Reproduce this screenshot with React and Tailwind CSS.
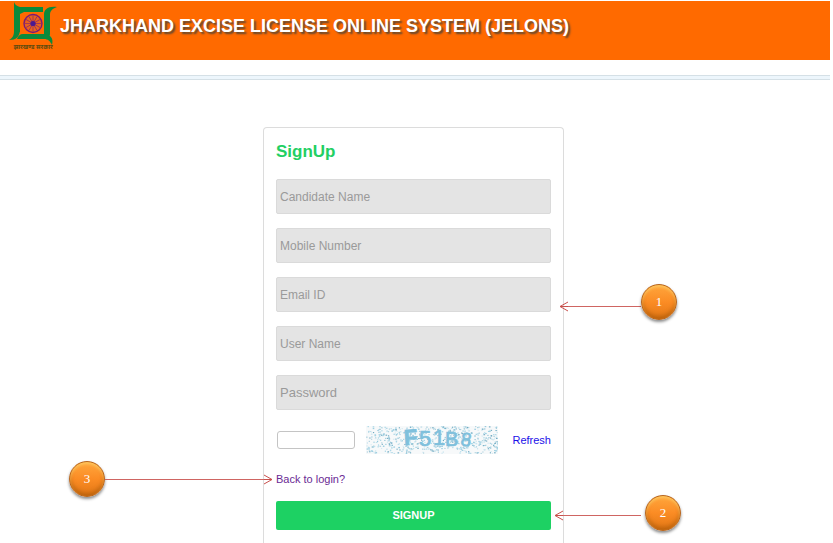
const fields = [
  { id: 'candidateName', label: 'Candidate Name', type: 'text' },
  { id: 'mobileNumber', label: 'Mobile Number', type: 'tel' },
  { id: 'emailId', label: 'Email ID', type: 'email' },
  { id: 'userName', label: 'User Name', type: 'text' },
  { id: 'password', label: 'Password', type: 'password' },
];

// fixed seed, so the speckles stay the same on every render
function makeSpeckles(count) {
  const colors = ['#9dd0e2', '#bfe0ec', '#93c8dc', '#d4eaf2', '#abd0dd', '#6ea9c1'];
  let seed = 41;
  const next = () => {
    seed = (seed * 16807) % 2147483647;
    return seed / 2147483647;
  };

  return Array.from({ length: count }, () => ({
    x: next() * 131,
    y: next() * 27,
    size: next() > 0.6 ? 1.6 : 1.2,
    color: colors[Math.floor(next() * colors.length)],
  }));
}

const speckles = makeSpeckles(640);

function Logo() {
  const spokes = Array.from({ length: 12 }, (_, i) => i * 30);

  return (
    <svg viewBox="0 0 48 49" className="h-[49px] w-12 shrink-0" role="img" aria-label="झारखण्ड सरकार">
      <g fill="#0b8a3c">
        <path d="M5 0 C6 3 8 4 11 5 H34 V10 H15 L11 12 V30 H5 Z" />
        <path d="M48 5 C43 7 41 9 41 13 V32 C41 35 38 37 35 37 V13 C35 7 39 4 48 5 Z" />
        <path d="M5 9 H11 V27 C11 35 7 38 0 38 C4 36 5 33 5 29 Z" />
        <path d="M8 37 C9 34 11 32 14 32 H35 C41 32 45 36 43 43 C41 39 39 37 35 37 Z" />
      </g>
      <circle cx="24" cy="21.5" r="9" fill="#e8631c" stroke="#7a1a78" strokeWidth="1.4" />
      <g stroke="#7a1a78" strokeWidth="0.6">
        {spokes.map((angle) => (
          <line key={angle} x1="24" y1="21.5" x2="24" y2="13.5" transform={`rotate(${angle} 24 21.5)`} />
        ))}
      </g>
      <circle cx="24" cy="21.5" r="2.6" fill="#4b1a90" />
      <text
        x="24"
        y="47"
        textAnchor="middle"
        fontSize="6"
        fontWeight="bold"
        fill="#5d4a10"
        fontFamily="'Noto Sans', sans-serif"
      >
        झारखण्ड सरकार
      </text>
    </svg>
  );
}

function Captcha() {
  return (
    <svg viewBox="0 0 132 28" className="h-7 w-[132px] shrink-0 bg-[#f7f9fa]" role="img" aria-label="Captcha F51B8">
      {speckles.map((s, i) => (
        <rect key={i} x={s.x} y={s.y} width={s.size} height="1.1" fill={s.color} />
      ))}
      <g fill="#7fc0dc" stroke="#7fc0dc" strokeWidth="0.7" fontFamily="'Liberation Sans', sans-serif" fontSize="22">
        <text x="38" y="19" fontWeight="bold" transform="rotate(-3 43 12)">F</text>
        <text x="53" y="20">5</text>
        <text x="67" y="19">1</text>
        <text x="79" y="20" fontSize="20">B</text>
        <text x="95" y="20" fontSize="19" transform="rotate(8 100 13)">8</text>
      </g>
    </svg>
  );
}

function Arrow({ direction, className = '' }) {
  const head = (
    <svg viewBox="0 0 9 11" className="h-[11px] w-[9px] shrink-0" fill="none" stroke="#c8504c" aria-hidden="true">
      <path d={direction === 'left' ? 'M9 1 L1 5.5 L9 10 M1 5.5 H9' : 'M0 1 L8 5.5 L0 10 M0 5.5 H8'} />
    </svg>
  );

  return (
    <span className={`flex min-w-0 flex-1 items-center ${className}`}>
      {direction === 'left' && head}
      <span className="h-px flex-1 bg-[#cf6562]" />
      {direction === 'right' && head}
    </span>
  );
}

function Ball({ children }) {
  return (
    <span className="flex size-9 shrink-0 items-center justify-center rounded-full border border-[#b8651c] bg-linear-to-b from-[#ffa63c] via-[#fb8c24] to-[#e27714] font-['Liberation_Serif',serif] text-[13px] text-white shadow-[0_2px_3px_rgba(0,0,0,0.45),inset_0_2px_3px_rgba(255,214,110,0.7),inset_0_-3px_4px_rgba(140,70,0,0.45)]">
      {children}
    </span>
  );
}

export default function App() {
  return (
    <div className="flex min-h-screen flex-col bg-white pt-px pr-[3px] font-['Liberation_Sans',Arial,sans-serif]">
      <header className="flex h-[59px] items-start gap-[3px] bg-[#ff6a00] pt-px pl-[9px]">
        <Logo />
        <h1 className="pt-3 text-lg leading-6 font-bold whitespace-nowrap text-white [text-shadow:2px_2px_2px_#5a4632]">
          JHARKHAND EXCISE LICENSE ONLINE SYSTEM (JELONS)
        </h1>
      </header>
      <div className="mt-[15px] h-[5px] border-y border-[#d5e0e6] bg-[#edf6fc]" />

      <main className="flex flex-1 justify-center pt-[47px] pr-[3px]">
        <form
          className="relative flex w-[301px] flex-col rounded-t border border-b-0 border-[#dcdcdc] px-3"
          onSubmit={(e) => e.preventDefault()}
        >
          <h2 className="pt-3 text-[17px] leading-6 font-bold text-[#23cf63]">SignUp</h2>

          <div className="mt-[15px] flex flex-col gap-[14px]">
            {fields.map((field) => (
              <input
                key={field.id}
                id={field.id}
                type={field.type}
                aria-label={field.label}
                placeholder={field.label}
                className={`h-[35px] w-full rounded-xs border border-[#dadada] bg-[#e4e4e4] px-[3px] placeholder:text-[#9a9a9a] ${
                  field.type === 'password' ? 'text-[13px]' : 'text-xs'
                }`}
              />
            ))}
          </div>

          <div className="mt-4 flex items-center justify-between pl-px">
            <input
              type="text"
              aria-label="Captcha"
              className="h-[18px] w-[78px] rounded-[3px] border border-[#c4c4c4] bg-white px-1 text-xs"
            />
            <Captcha />
            <a href="#refresh" className="pl-1 text-[11px] text-[#1a10e8]">
              Refresh
            </a>
          </div>

          <a href="#login" className="mt-[17px] self-start text-[11px] leading-4 text-[#6a2a94]">
            Back to login?
          </a>

          <button type="submit" className="mt-[14px] h-[29px] w-full rounded-xs bg-[#1dd163] text-[11px] font-bold text-white">
            SIGNUP
          </button>

          <div className="absolute top-[156px] left-[295px] flex w-[118px] items-center">
            <Arrow direction="left" className="pt-2" />
            <Ball>1</Ball>
          </div>
          <div className="absolute top-[367px] left-[290px] flex w-[127px] items-center gap-1">
            <Arrow direction="left" className="pt-1" />
            <Ball>2</Ball>
          </div>
          <div className="absolute top-[333px] right-[290px] flex w-[204px] items-center">
            <Ball>3</Ball>
            <Arrow direction="right" />
          </div>
        </form>
      </main>
    </div>
  );
}
